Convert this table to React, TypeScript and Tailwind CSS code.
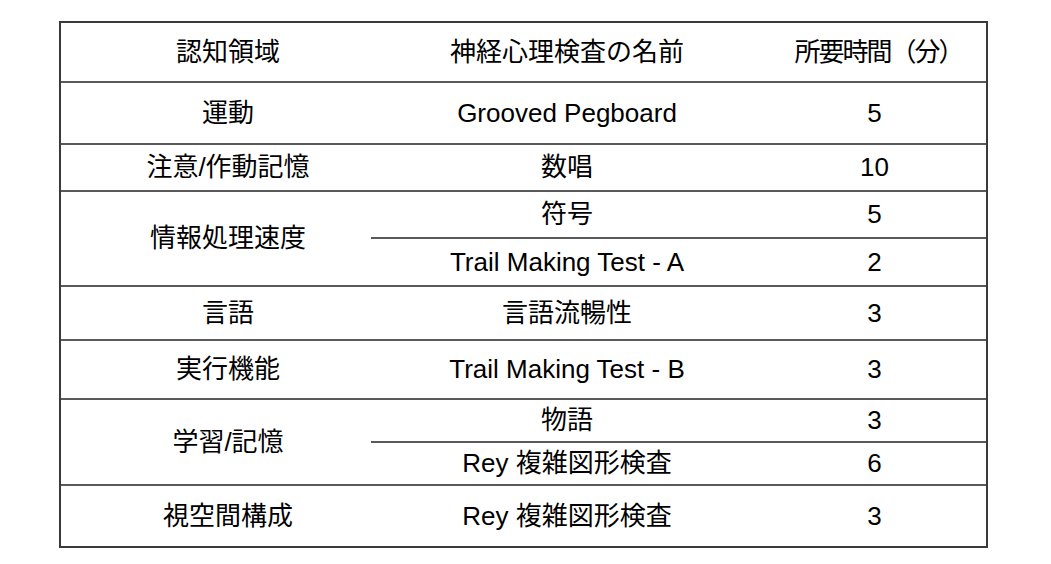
const rows = [
  { domain: "運動", tests: [{ name: "Grooved Pegboard", min: "5", h: "h-[60px]" }] },
  { domain: "注意/作動記憶", tests: [{ name: "数唱", min: "10", h: "h-[45px]" }] },
  {
    domain: "情報処理速度",
    tests: [
      { name: "符号", min: "5", h: "h-[45px]" },
      { name: "Trail Making Test - A", min: "2", h: "h-[48px]" },
    ],
  },
  { domain: "言語", tests: [{ name: "言語流暢性", min: "3", h: "h-[52px]" }] },
  { domain: "実行機能", tests: [{ name: "Trail Making Test - B", min: "3", h: "h-[57px]" }] },
  {
    domain: "学習/記憶",
    tests: [
      { name: "物語", min: "3", h: "h-[41px]" },
      { name: "Rey 複雑図形検査", min: "6", h: "h-[43px]" },
    ],
  },
  { domain: "視空間構成", tests: [{ name: "Rey 複雑図形検査", min: "3", h: "h-[60px]" }] },
];

export default function App() {
  return (
    <div
      className="w-[1051px] h-[564px] bg-white pt-[21px] pl-[59px] text-[26px] text-black"
      style={{ fontFamily: '"Liberation Sans", "Noto Sans CJK JP", sans-serif' }}
    >
      <div className="w-[929px] border-2 border-[#3a3a3a] flex flex-col">
        <div className="flex h-[58px] items-center">
          <div className="w-[310px] pl-6 text-center">認知領域</div>
          <div className="w-[392px] text-center">神経心理検査の名前</div>
          <div className="flex-1 text-center pl-2 tracking-[-2px]">所要時間（分）</div>
        </div>
        {rows.map((row, i) => (
          <div key={i} className="flex border-t-2 border-[#5a5a5a]">
            <div className="w-[310px] pl-6 flex items-center justify-center">{row.domain}</div>
            <div className="flex-1 flex flex-col">
              {row.tests.map((t, j) => (
                <div
                  key={j}
                  className={`flex items-center box-border ${t.h} ${j > 0 ? "border-t-2 border-[#5a5a5a]" : ""}`}
                >
                  <div className="w-[392px] text-center">{t.name}</div>
                  <div className="flex-1 text-center">{t.min}</div>
                </div>
              ))}
            </div>
          </div>
        ))}
      </div>
    </div>
  );
}
